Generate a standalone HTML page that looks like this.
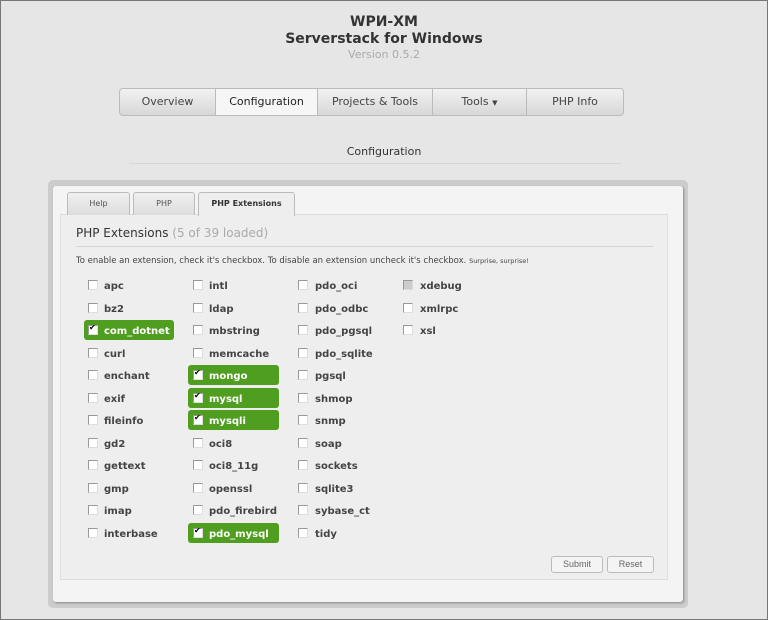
<!DOCTYPE html><html><head><style>
body{margin:0;width:768px;height:620px;background:#e6e6e6;font-family:"DejaVu Sans","Liberation Sans",sans-serif;position:relative;overflow:hidden}
.frame{position:absolute;left:0;top:0;width:766px;height:618px;border:1px solid #777}
.t{position:absolute;left:0;width:768px;text-align:center;color:#333;font-weight:bold;font-size:14px}
.nav{position:absolute;left:119px;top:88px;width:503px;height:26px;border:1px solid #bbb;border-radius:4px;background:linear-gradient(#f2f2f2,#d8d8d8);display:flex;font-size:11px;color:#444}
.nav div{height:26px;line-height:26px;text-align:center;border-left:1px solid #bbb}
.nav div:first-child{border-left:none}
.outer{position:absolute;left:48px;top:180px;width:640px;height:428px;background:#ccc;border-radius:5px}
.inner{position:absolute;left:53px;top:186px;width:630px;height:416px;background:#f4f4f4;border-radius:3px;box-shadow:1px 1px 2px #888}
.tab{position:absolute;top:192px;height:22px;border:1px solid #bbb;border-bottom:none;border-radius:3px 3px 0 0;background:linear-gradient(#f0f0f0,#ddd);font-size:8px;color:#555;text-align:center;line-height:22px}
.content{position:absolute;left:60px;top:214px;width:606px;height:364px;background:#eee;border:1px solid #ddd}
.it{position:absolute;font-size:10px;font-weight:bold;color:#444;height:20px;line-height:20px}
.cb{position:absolute;width:8px;height:8px;background:#fff;border:1px solid #999;border-right-color:#ddd;border-bottom-color:#ddd}
.g{position:absolute;background:#4f9e1f;border-radius:3px;height:20px}
.btn{position:absolute;top:556px;height:15px;border:1px solid #bbb;border-radius:3px;background:#f4f4f4;font-family:"Liberation Sans",sans-serif;font-size:9px;color:#666;text-align:center;line-height:15px}
</style></head><body>
<div class="frame"></div>
<div class="t" style="top:14px">WPИ-XM</div>
<div class="t" style="top:31px">Serverstack for Windows</div>
<div class="t" style="top:48px;font-weight:normal;font-size:11px;color:#aaa">Version 0.5.2</div>
<div class="nav"><div style="width:95px">Overview</div><div style="width:101px;background:#f6f6f6;color:#222">Configuration</div><div style="width:114px">Projects &amp; Tools</div><div style="width:93px">Tools <span style="font-size:7px">▼</span></div><div style="width:96px">PHP Info</div></div>
<div class="t" style="top:145px;font-weight:normal;font-size:11px">Configuration</div>
<div style="position:absolute;left:129px;top:163px;width:492px;height:1px;background:#d6d6d6"></div>
<div class="outer"></div><div class="inner"></div>
<div class="content"></div>
<div class="tab" style="left:67px;width:61px">Help</div>
<div class="tab" style="left:133px;width:60px">PHP</div>
<div class="tab" style="left:198px;width:95px;height:23px;background:#eee;font-weight:bold;color:#333">PHP Extensions</div>
<div style="position:absolute;left:76px;top:226px;font-size:12px;color:#333">PHP Extensions <span style="color:#aaa">(5 of 39 loaded)</span></div>
<div style="position:absolute;left:76px;top:246px;width:577px;height:1px;background:#d6d6d6"></div>
<div style="position:absolute;left:76px;top:256px;font-size:8.5px;color:#444;white-space:nowrap">To enable an extension, check it's checkbox. To disable an extension uncheck it's checkbox. <span style="font-size:6.5px">Surprise, surprise!</span></div>
<div id="list"></div>
<div class="btn" style="left:551px;width:50px">Submit</div>
<div class="btn" style="left:607px;width:45px">Reset</div>
<script>
var cols=[[88,104,["apc","bz2","com_dotnet","curl","enchant","exif","fileinfo","gd2","gettext","gmp","imap","interbase"]],[193,209,["intl","ldap","mbstring","memcache","mongo","mysql","mysqli","oci8","oci8_11g","openssl","pdo_firebird","pdo_mysql"]],[298,315,["pdo_oci","pdo_odbc","pdo_pgsql","pdo_sqlite","pgsql","shmop","snmp","soap","sockets","sqlite3","sybase_ct","tidy"]],[403,420,["xdebug","xmlrpc","xsl"]]];
var on={com_dotnet:[84,174],mongo:[188,279],mysql:[188,279],mysqli:[188,279],pdo_mysql:[188,279]};
var h="";
cols.forEach(function(c){c[2].forEach(function(n,i){var y=285+22.5*i;var o=on[n];
if(o)h+='<div class="g" style="left:'+o[0]+'px;width:'+(o[1]-o[0])+'px;top:'+(y-10)+'px"></div>';
h+='<div class="cb" style="left:'+c[0]+'px;top:'+(y-5)+'px;'+(n=="xdebug"?'background:#ccc':'')+'">'+(o?'<span style="position:absolute;left:0;top:-3px;font-size:8px;color:#000">✔</span>':'')+'</div>';
h+='<div class="it" style="left:'+c[1]+'px;top:'+(y-8)+'px;'+(o?'color:#fff':'')+'">'+n+'</div>';});});
document.getElementById("list").innerHTML=h;
</script>
</body></html>
